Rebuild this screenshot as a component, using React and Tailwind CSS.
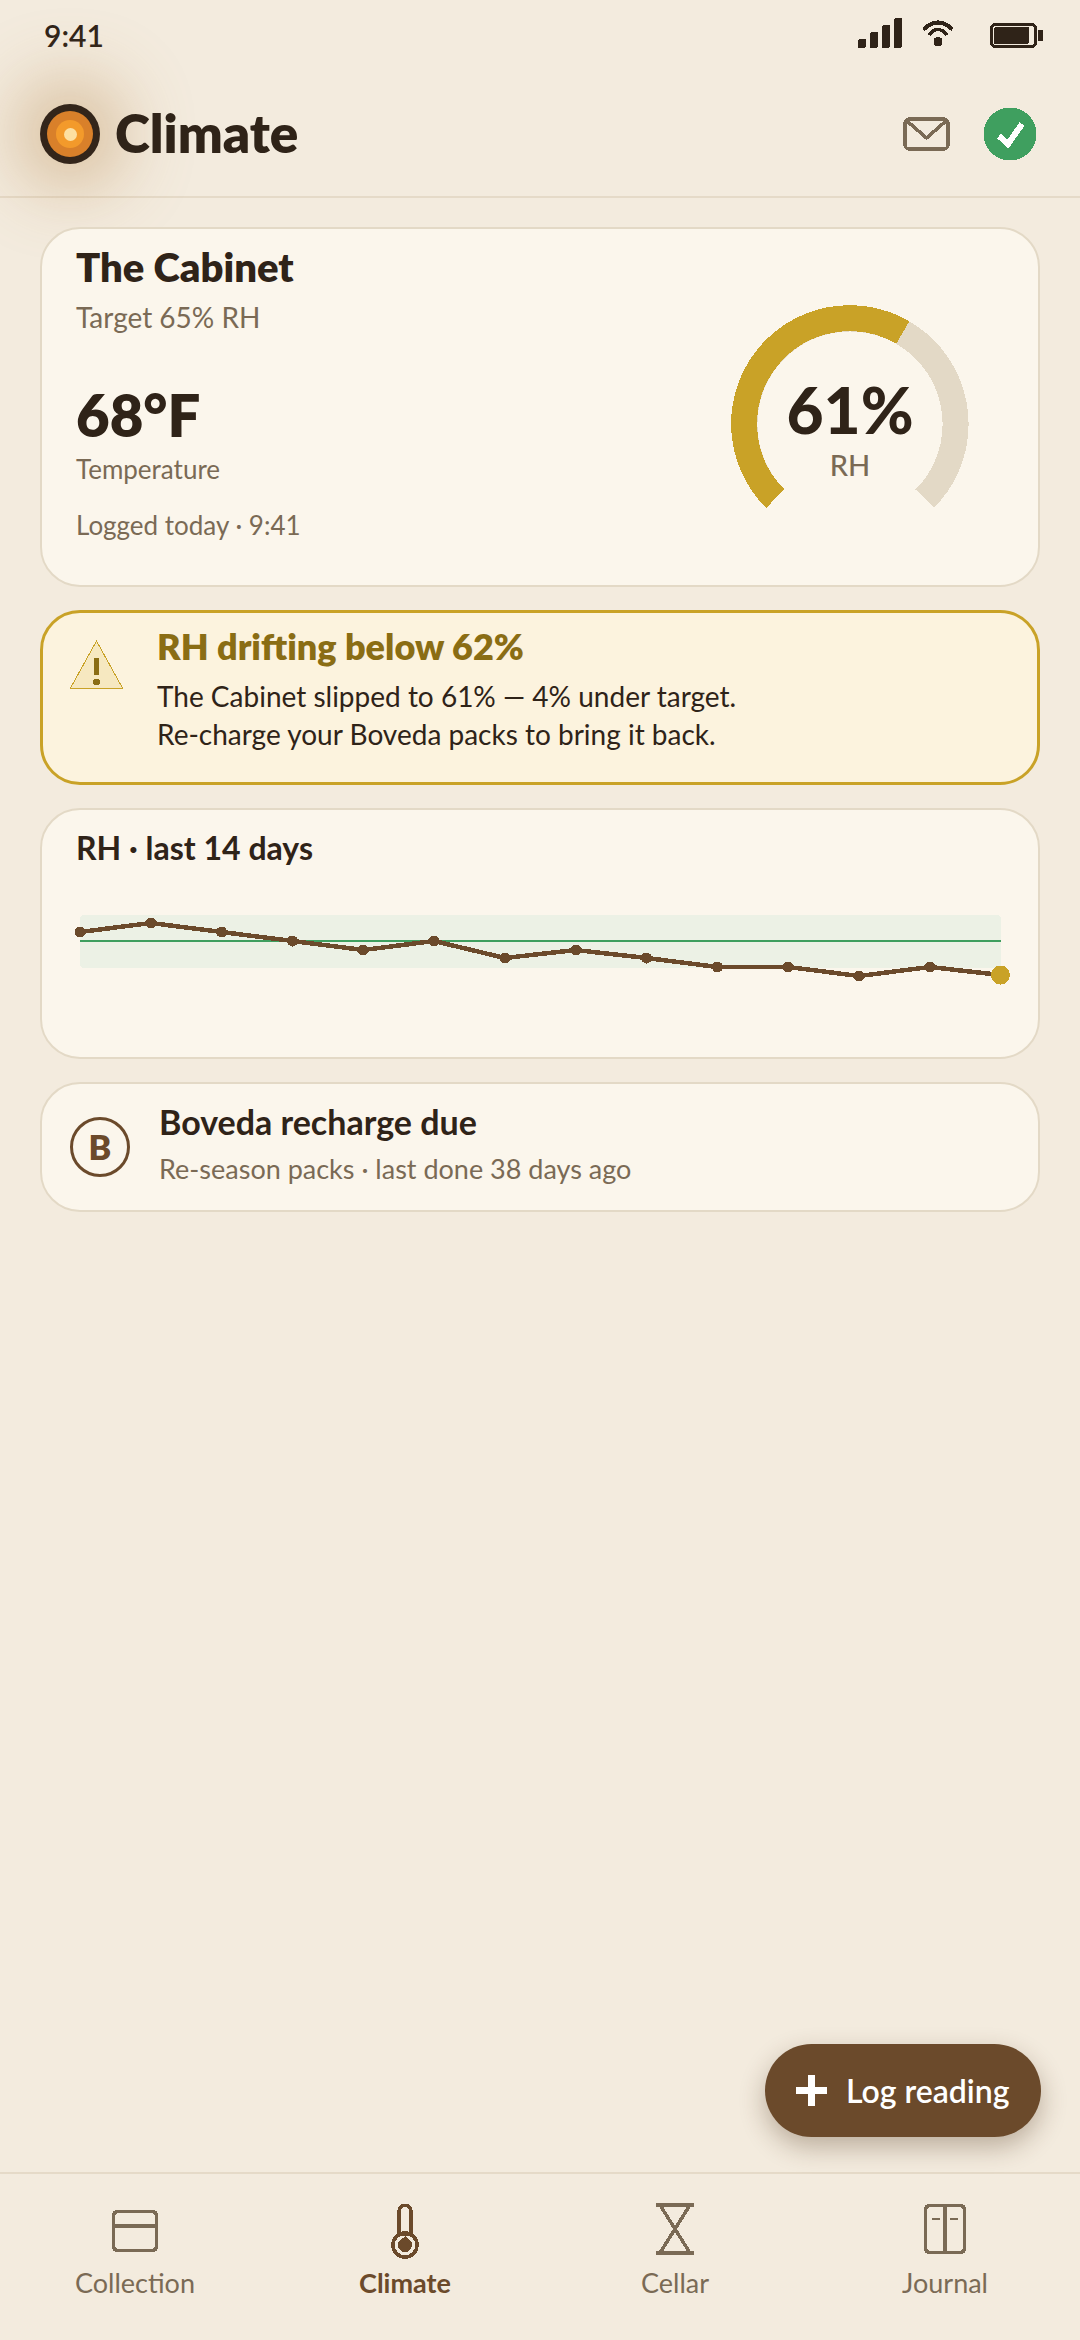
import React from 'react';

const font = { fontFamily: 'Lato, sans-serif' };

const points = [
  [80, 42], [150.8, 33], [221.6, 42], [292.5, 51], [363.3, 60], [434, 51], [504.9, 68],
  [575.7, 60], [646.5, 68], [717.4, 77], [788.2, 77], [859, 86], [929.8, 77], [1000.6, 85],
];

function StatusBar() {
  return (
    <div className="flex h-[52px] items-start justify-between pl-[44px] pr-[37px]">
      <span className="mt-[17px] text-[30px] leading-[36px] font-semibold text-[#2f2318]">9:41</span>
      <svg width="186" height="35" viewBox="0 0 186 35" shapeRendering="crispEdges" className="mt-[17px]">
        <g fill="#2f2318">
          <rect x="1" y="22" width="8" height="9" rx="2" />
          <rect x="13" y="15" width="8" height="16" rx="2" />
          <rect x="25" y="8" width="8" height="23" rx="2" />
          <rect x="37" y="1" width="8" height="30" rx="2" />
          <circle cx="81" cy="25" r="4.500" />
          <path d="M76.500 22 Q81 18 85.500 22 Z" />
          <rect x="137" y="10" width="35" height="17" rx="2" />
          <rect x="181" y="13" width="5" height="11" />
        </g>
        <rect x="134.500" y="7.500" width="44" height="22" rx="4" fill="none" stroke="#2f2318" strokeWidth="3" />
        <g fill="none" stroke="#2f2318">
          <path d="M66.500 12.500 Q81 -1.500 95.500 12.500" strokeWidth="4" />
          <path d="M72 18 Q81 7 90 18" strokeWidth="3.500" />
        </g>
      </svg>
    </div>
  );
}

function Header() {
  return (
    <header className="flex h-[146px] items-center justify-between border-b-2 border-[#e5dac8] pt-[20px] pl-[40px] pr-[43px]">
      <div className="flex items-center gap-[15px]">
        <div className="flex h-[60px] w-[60px] items-center justify-center rounded-full bg-[#33251a] shadow-[0_0_70px_24px_rgba(185,135,75,0.45)]">
          <div className="flex h-[46px] w-[46px] items-center justify-center rounded-full bg-[#d9802a]">
            <div className="flex h-[28px] w-[28px] items-center justify-center rounded-full bg-[#f39a2b]">
              <div className="h-[13px] w-[13px] rounded-full bg-[#fde0a2]" />
            </div>
          </div>
        </div>
        <h1 className="mb-[3px] text-[53px] leading-[60px] font-extrabold text-[#2f2318]">Climate</h1>
      </div>
      <div className="flex items-center gap-[33px]">
        <svg width="47" height="34" viewBox="0 0 47 34" fill="none" stroke="#7a6a55" strokeWidth="3.500" shapeRendering="crispEdges">
          <rect x="2" y="2" width="43" height="30" rx="4" />
          <path d="M4 4 L23.500 21 L43 4" />
        </svg>
        <svg width="54" height="54" viewBox="0 0 54 54" shapeRendering="crispEdges">
          <circle cx="27" cy="27" r="26.500" fill="#3f9f5f" />
          <path d="M16 29 L25 37 L39 17" fill="none" stroke="#ffffff" strokeWidth="6" />
        </svg>
      </div>
    </header>
  );
}

function Gauge() {
  return (
    <div className="relative h-[240px] w-[240px]">
      <svg width="240" height="240" viewBox="0 0 240 240" fill="none" strokeWidth="26" shapeRendering="crispEdges">
        <path d="M45.300 194.700 A105.600 105.600 0 1 1 194.700 194.700" stroke="#e3d9c6" />
        <path d="M45.300 194.700 A105.600 105.600 0 0 1 172.800 28.500" stroke="#c9a227" />
      </svg>
      <div className="absolute inset-0 flex flex-col items-center pt-[68px]">
        <span className="text-[64px] leading-[76px] font-black text-[#2f2318]">61%</span>
        <span className="text-[29px] leading-[34px] font-medium text-[#7a6a55]">RH</span>
      </div>
    </div>
  );
}

function ClimateCard() {
  return (
    <section className="flex h-[360px] items-start justify-between rounded-[40px] border-2 border-[#e3d9c6] bg-[#fbf6ec] pl-[34px] pr-[68px]">
      <div className="pt-[13px]">
        <h2 className="text-[40px] leading-[50px] font-extrabold text-[#2f2318]">The Cabinet</h2>
        <p className="mt-[7px] text-[28px] leading-[36px] text-[#7a6a55]">Target 65% RH</p>
        <p className="mt-[44px] text-[58px] leading-[72px] font-extrabold text-[#2f2318]">68°F</p>
        <p className="mt-[1px] text-[26px] leading-[34px] text-[#7a6a55]">Temperature</p>
        <p className="mt-[22px] text-[26px] leading-[34px] text-[#7a6a55]">Logged today · 9:41</p>
      </div>
      <div className="pt-[75px]">
        <Gauge />
      </div>
    </section>
  );
}

function Alert() {
  return (
    <section className="flex h-[175px] gap-[33px] rounded-[40px] border-[3px] border-[#c9a227] bg-[#fcf3de] pl-[27px] pt-[11px]">
      <svg width="54" height="50" viewBox="0 0 54 50" className="mt-[16px] shrink-0" shapeRendering="crispEdges">
        <path d="M26.500 1 L52.500 48 L0.500 48 Z" fill="#f6e8c0" stroke="#c9a227" strokeWidth="1" />
        <rect x="24" y="18" width="5" height="17" fill="#8a6d14" />
        <circle cx="26.500" cy="42" r="3.500" fill="#8a6d14" />
      </svg>
      <div>
        <h3 className="text-[36px] leading-[44px] font-extrabold text-[#8a6d14]">RH drifting below 62%</h3>
        <p className="mt-[9px] text-[28px] leading-[38px] text-[#2f2318]">
          The Cabinet slipped to 61% — 4% under target.
          <br />
          Re-charge your Boveda packs to bring it back.
        </p>
      </div>
    </section>
  );
}

function TrendCard() {
  return (
    <section className="h-[251px] rounded-[40px] border-2 border-[#e3d9c6] bg-[#fbf6ec] pt-[19px] pl-[34px]">
      <h3 className="text-[32px] leading-[38px] font-bold text-[#2f2318]">RH · last 14 days</h3>
      <svg viewBox="0 0 1024 128" className="mt-[23px] h-[128px] w-[1024px] overflow-visible" shapeRendering="crispEdges">
        <g transform="translate(-76 0)">
          <rect x="80" y="25" width="921" height="53" rx="4" fill="#ecf1e5" />
          <rect x="80" y="50" width="921" height="2" fill="#3f9f5f" />
          <polyline points={points.map(p => p.join(',')).join(' ')} fill="none" stroke="#6b4a2b" strokeWidth="4.500" />
          {points.slice(0, 13).map(([x, y]) => (
            <circle key={x} cx={x} cy={y} r="5.500" fill="#6b4a2b" />
          ))}
          <circle cx="1000.500" cy="85" r="9.500" fill="#c9a227" />
        </g>
      </svg>
    </section>
  );
}

function ReminderCard() {
  return (
    <section className="flex h-[130px] items-center gap-[29px] rounded-[40px] border-2 border-[#e3d9c6] bg-[#fbf6ec] pl-[28px]">
      <div className="flex h-[60px] w-[60px] items-center justify-center rounded-full border-[3px] border-[#6b4a2b]">
        <span className="text-[34px] leading-none font-extrabold text-[#6b4a2b]">B</span>
      </div>
      <div className="pb-[7px]">
        <p className="text-[34px] leading-[42px] font-bold text-[#2f2318]">Boveda recharge due</p>
        <p className="mt-[9px] text-[27px] leading-[34px] text-[#7a6a55]">Re-season packs · last done 38 days ago</p>
      </div>
    </section>
  );
}

function NavItem({ label, active, children }) {
  return (
    <div className={`flex flex-col items-center ${active ? 'text-[#6b4a2b]' : 'text-[#7a6a55]'}`}>
      <div className="flex h-[56px] items-center justify-center">{children}</div>
      <span className={`mt-[7px] text-[27px] leading-[34px] ${active ? 'font-bold' : 'font-normal'}`}>{label}</span>
    </div>
  );
}

function BottomNav() {
  return (
    <nav className="grid h-[168px] grid-cols-4 border-t-2 border-[#e5dac8] pt-[29px]">
      <NavItem label="Collection">
        <svg width="46" height="42" viewBox="0 0 46 42" fill="none" stroke="#7a6a55" strokeWidth="3.500" shapeRendering="crispEdges">
          <rect x="1.500" y="1.500" width="43" height="39" rx="4" />
          <path d="M1.500 16 L44.500 16" />
        </svg>
      </NavItem>
      <NavItem label="Climate" active>
        <svg width="28" height="55" viewBox="0 0 28 55" fill="none" stroke="#6b4a2b" strokeWidth="3.500" shapeRendering="crispEdges">
          <path d="M8 30 L8 7 A6 6 0 0 1 20 7 L20 30 Z" />
          <circle cx="14" cy="41" r="12" />
          <circle cx="14" cy="41" r="7" fill="#6b4a2b" stroke="none" />
          <path d="M9 37 L14 32 L19 37 Z" fill="#6b4a2b" stroke="none" />
        </svg>
      </NavItem>
      <NavItem label="Cellar">
        <svg width="38" height="52" viewBox="0 0 38 52" fill="none" stroke="#7a6a55" strokeWidth="3.500" className="mb-[4px]" shapeRendering="crispEdges">
          <path d="M0 2 L38 2 M0 50 L38 50 M4 2 L34 50 M34 2 L4 50" />
        </svg>
      </NavItem>
      <NavItem label="Journal">
        <svg width="42" height="50" viewBox="0 0 42 50" fill="none" stroke="#7a6a55" strokeWidth="3.500" className="mb-[4px]" shapeRendering="crispEdges">
          <rect x="1.500" y="1.500" width="39" height="47" rx="4" />
          <path d="M21 1.500 L21 48.500" />
          <path d="M8 15 L16 15 M26 15 L34 15" strokeWidth="2.500" />
        </svg>
      </NavItem>
    </nav>
  );
}

export default function App() {
  return (
    <div className="relative flex h-[2340px] w-[1080px] flex-col overflow-hidden bg-[#f3ebde]" style={font}>
      <StatusBar />
      <Header />
      <main className="flex flex-1 flex-col gap-[23px] pt-[29px] pl-[40px] pr-[40px]">
        <ClimateCard />
        <Alert />
        <TrendCard />
        <ReminderCard />
      </main>
      <button className="absolute left-[765px] top-[2044px] flex h-[93px] w-[276px] items-center gap-[19px] rounded-full bg-[#6b4a2b] pl-[31px] text-[32px] font-semibold text-white shadow-[0_10px_26px_rgba(70,45,20,0.32)]">
        <svg width="31" height="31" viewBox="0 0 31 31" stroke="#ffffff" strokeWidth="7.500" shapeRendering="crispEdges">
          <path d="M15.500 0 L15.500 31 M0 15.500 L31 15.500" />
        </svg>
        Log reading
      </button>
      <BottomNav />
    </div>
  );
}
